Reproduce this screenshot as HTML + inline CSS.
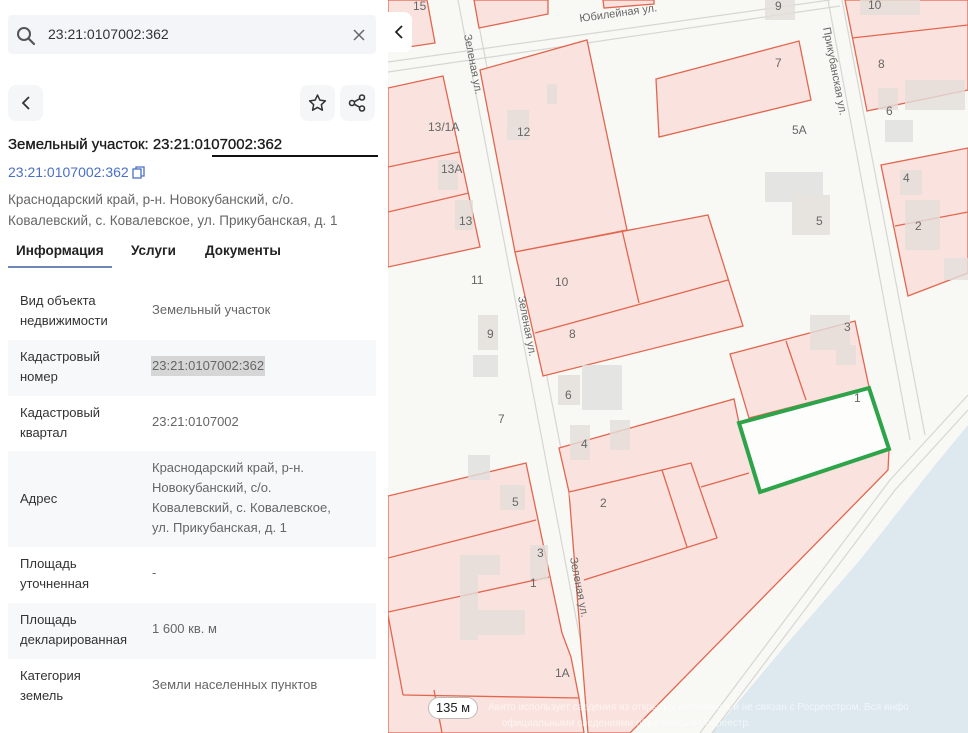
<!DOCTYPE html>
<html><head><meta charset="utf-8"><style>
*{margin:0;padding:0;box-sizing:border-box}
body{width:968px;height:733px;overflow:hidden;font-family:"Liberation Sans","Noto Sans CJK SC",sans-serif;background:#fff;position:relative}
#left{position:absolute;left:0;top:0;width:388px;height:733px;background:#fff}
.abs{position:absolute}
.btn{position:absolute;background:#f5f6f8;border-radius:8px;width:35px;height:36px}
.row{position:absolute;left:8px;width:368px}
.row.g{background:#f7f8fa}
.lab{position:absolute;left:12px;font-size:13px;line-height:20px;color:#333}
.val{position:absolute;left:144px;font-size:13px;line-height:20px;color:#666}
#map{position:absolute;left:388px;top:0;width:580px;height:733px;overflow:hidden;background:#f8f8f4}
</style></head><body>
<div id="left">
 <div class="abs" style="left:8px;top:15px;width:368px;height:39px;background:#f3f5f8;border-radius:4px"></div>
 <svg class="abs" style="left:16px;top:26px" width="20" height="20" viewBox="0 0 20 20"><circle cx="8" cy="8" r="6" fill="none" stroke="#555" stroke-width="2"/><path d="M12.5 12.5 L18 18" stroke="#555" stroke-width="2.2" stroke-linecap="round"/></svg>
 <div class="abs" style="left:48px;top:26px;font-size:14px;color:#333">23:21:0107002:362</div>
 <svg class="abs" style="left:353px;top:29px" width="12" height="12"><path d="M1 1L11 11M11 1L1 11" stroke="#666" stroke-width="1.5"/></svg>
 <div class="btn" style="left:8px;top:85px"></div>
 <svg class="abs" style="left:19px;top:95px" width="14" height="16"><path d="M10 2L4 8L10 14" fill="none" stroke="#333" stroke-width="1.8"/></svg>
 <div class="btn" style="left:300px;top:85px"></div>
 <svg class="abs" style="left:307px;top:93px" width="21" height="20" viewBox="0 0 24 24"><path d="M12 2.5l2.9 6.1 6.6.8-4.9 4.6 1.3 6.6L12 17.3l-5.9 3.3 1.3-6.6L2.5 9.4l6.6-.8z" fill="none" stroke="#333" stroke-width="1.8" stroke-linejoin="round"/></svg>
 <div class="btn" style="left:340px;top:85px"></div>
 <svg class="abs" style="left:347px;top:93px" width="20" height="20" viewBox="0 0 20 20"><circle cx="15" cy="4.5" r="2.5" fill="none" stroke="#333" stroke-width="1.6"/><circle cx="5" cy="10" r="2.5" fill="none" stroke="#333" stroke-width="1.6"/><circle cx="15" cy="15.5" r="2.5" fill="none" stroke="#333" stroke-width="1.6"/><path d="M7.2 8.8L12.8 5.7M7.2 11.2L12.8 14.3" stroke="#333" stroke-width="1.6"/></svg>
 <div class="abs" style="left:8px;top:136px;font-size:15px;color:#1a1a1a;-webkit-text-stroke:0.3px #1a1a1a">Земельный участок: 23:21:0107002:362</div>
 <div class="abs" style="left:212px;top:155px;width:166px;height:1.5px;background:#111"></div>
 <div class="abs" style="left:8px;top:164px;font-size:14px;color:#4a6fc8">23:21:0107002:362</div>
 <svg class="abs" style="left:132px;top:166px" width="13" height="13"><rect x="1" y="3" width="8" height="9" fill="none" stroke="#4a6fc8" stroke-width="1.3"/><path d="M4 3V1H12V10H9" fill="none" stroke="#4a6fc8" stroke-width="1.3"/></svg>
 <div class="abs" style="left:8px;top:189px;font-size:13.5px;line-height:21px;color:#666">Краснодарский край, р-н. Новокубанский, с/о.<br>Ковалевский, с. Ковалевское, ул. Прикубанская, д. 1</div>
 <div class="abs" style="left:16px;top:243px;font-size:13.5px;font-weight:bold;color:#222">Информация</div>
 <div class="abs" style="left:131px;top:243px;font-size:13.5px;font-weight:bold;color:#222">Услуги</div>
 <div class="abs" style="left:205px;top:243px;font-size:13.5px;font-weight:bold;color:#222">Документы</div>
 <div class="abs" style="left:8px;top:266px;width:104px;height:2px;background:#6f86b6"></div>

 <div class="row" style="top:284px;height:56px"><div class="lab" style="top:7px">Вид объекта<br>недвижимости</div><div class="val" style="top:16px">Земельный участок</div></div>
 <div class="row g" style="top:340px;height:56px"><div class="lab" style="top:7px">Кадастровый<br>номер</div><div class="val" style="top:16px;background:#d6d6d6;padding:0 1px;left:143px">23:21:0107002:362</div></div>
 <div class="row" style="top:396px;height:55px"><div class="lab" style="top:7px">Кадастровый<br>квартал</div><div class="val" style="top:16px">23:21:0107002</div></div>
 <div class="row g" style="top:451px;height:96px"><div class="lab" style="top:38px">Адрес</div><div class="val" style="top:7px">Краснодарский край, р-н.<br>Новокубанский, с/о.<br>Ковалевский, с. Ковалевское,<br>ул. Прикубанская, д. 1</div></div>
 <div class="row" style="top:547px;height:56px"><div class="lab" style="top:7px">Площадь<br>уточненная</div><div class="val" style="top:16px">-</div></div>
 <div class="row g" style="top:603px;height:56px"><div class="lab" style="top:7px">Площадь<br>декларированная</div><div class="val" style="top:16px">1 600 кв. м</div></div>
 <div class="row" style="top:659px;height:56px"><div class="lab" style="top:7px">Категория<br>земель</div><div class="val" style="top:16px">Земли населенных пунктов</div></div>
</div>

<div id="map">
<svg width="580" height="733" viewBox="388 0 580 733" style="position:absolute;left:0;top:0">
 <path d="M968 425 L935 465 L860 560 L790 640 L712 733 L968 733 Z" fill="#dde9ef"/>
 <g stroke="#d6d6d2" stroke-width="1.2" fill="none">
  <path d="M458 0 L598 733"/><path d="M474 0 L616 733"/>
  <path d="M388 62 L830 0"/><path d="M388 72 L840 6"/>
  <path d="M828 0 L910 440"/><path d="M842 0 L925 435"/>
  <path d="M968 395 L890 480 L700 733"/><path d="M968 410 L895 490 L712 733"/>
 </g>
 <g fill="#fae3de" stroke="#e2664f" stroke-width="1.3">
  <path d="M388 0 L427 0 L435 43 L388 50Z"/>
  <path d="M474 0 L548 0 L548 14 L479 28Z"/>
  <path d="M603 0 L654 0 L654 4 L604 8Z"/>
  <path d="M480 70 L587 40 L627 230 L515 252Z"/>
  <path d="M515 252 L708 215 L743 326 L543 376Z"/>
  <path d="M622 230 L639 303"/><path d="M535 333 L728 280"/>
  <path d="M656 79 L799 41 L811 100 L659 137Z"/>
  <path d="M388 88 L443 76 L480 247 L388 267Z"/>
  <path d="M388 167 L459 152"/><path d="M388 212 L469 193"/>
  <path d="M845 0 L968 0 L968 90 L867 111Z"/><path d="M852 38 L968 25"/>
  <path d="M881 165 L968 148 L968 273 L908 296Z"/><path d="M895 226 L968 212"/>
  <path d="M730 354 L855 321 L869 387 L749 418Z"/><path d="M786 341 L806 400"/>
  <path d="M559 448 L734 399 L739 423 L869 388 L889 449 L888 470 L630 733 L588 733 L569 492Z"/>
  <path d="M569 492 L662 470 L691 463 L717 538 L584 580"/><path d="M662 470 L687 547"/><path d="M701 487 L749 473"/>
  <path d="M388 496 L526 463 L562 633 L571 657 L579 698 L584 733 L388 733Z"/>
  <path d="M388 558 L536 520"/><path d="M388 612 L549 577"/><path d="M403 695 L579 698"/><path d="M388 615 L403 695"/><path d="M434 690 L442 733"/>
 </g>
 <g fill="#e4dfdb" opacity="0.8">
  <rect x="507" y="110" width="22" height="30"/><rect x="547" y="84" width="10" height="20"/>
  <rect x="438" y="160" width="20" height="30"/><rect x="455" y="200" width="18" height="30"/>
  <rect x="765" y="172" width="58" height="30" fill="#e0e0e0"/><rect x="792" y="195" width="38" height="40"/>
  <rect x="885" y="120" width="28" height="22" fill="#e0e0e0"/><rect x="905" y="80" width="60" height="30"/>
  <rect x="878" y="88" width="20" height="22"/><rect x="900" y="170" width="22" height="25"/>
  <rect x="905" y="200" width="35" height="50"/><rect x="944" y="258" width="24" height="22"/>
  <rect x="478" y="315" width="20" height="35"/><rect x="473" y="355" width="25" height="22" fill="#e0e0e0"/>
  <rect x="558" y="375" width="22" height="30"/><rect x="582" y="365" width="40" height="45" fill="#e0e0e0"/>
  <rect x="570" y="425" width="20" height="35"/><rect x="610" y="420" width="20" height="30"/>
  <rect x="468" y="455" width="22" height="25" fill="#e0e0e0"/><rect x="500" y="485" width="25" height="25"/>
  <rect x="530" y="545" width="18" height="35"/><rect x="460" y="555" width="40" height="20"/>
  <rect x="460" y="555" width="18" height="85"/><rect x="470" y="610" width="55" height="25"/>
  <rect x="810" y="315" width="40" height="35"/><rect x="836" y="345" width="20" height="20"/>
  <rect x="765" y="0" width="30" height="20"/><rect x="860" y="0" width="60" height="15"/>
 </g>
 <path d="M739 423 L869 388 L889 449 L760 492Z" fill="#fdfdfb" stroke="#2ea44a" stroke-width="4" stroke-linejoin="miter"/>
 <g font-family="Liberation Sans, sans-serif" font-size="12" fill="#666">
  <text x="413" y="10">15</text><text x="775" y="10">9</text><text x="868" y="9">10</text>
  <text x="428" y="131">13/1А</text><text x="441" y="173">13А</text><text x="459" y="225">13</text>
  <text x="517" y="136">12</text><text x="775" y="67">7</text><text x="792" y="134">5А</text>
  <text x="878" y="68">8</text><text x="886" y="115">6</text><text x="903" y="182">4</text><text x="915" y="230">2</text>
  <text x="816" y="225">5</text><text x="471" y="284">11</text><text x="555" y="286">10</text>
  <text x="569" y="338">8</text><text x="487" y="338">9</text><text x="844" y="331">3</text>
  <text x="565" y="399">6</text><text x="498" y="423">7</text><text x="854" y="402">1</text>
  <text x="581" y="448">4</text><text x="512" y="506">5</text><text x="600" y="507">2</text>
  <text x="537" y="557">3</text><text x="530" y="587">1</text><text x="555" y="677">1А</text>
  <text x="580" y="22" font-size="11" transform="rotate(-8 580 22)">Юбилейная ул.</text>
  <text x="464" y="35" font-size="11" transform="rotate(79 464 35)">Зеленая ул.</text>
  <text x="518" y="297" font-size="11" transform="rotate(79 518 297)">Зеленая ул.</text>
  <text x="570" y="558" font-size="11" transform="rotate(79 570 558)">Зеленая ул.</text>
  <text x="823" y="28" font-size="11" transform="rotate(79 823 28)">Прикубанская ул.</text>
 </g>
</svg>
 <div class="abs" style="left:0;top:12px;width:24px;height:40px;background:#fff;border-radius:0 8px 8px 0"></div>
 <svg class="abs" style="left:5px;top:24px" width="12" height="16"><path d="M9 2L3 8L9 14" fill="none" stroke="#222" stroke-width="1.8"/></svg>
 <div class="abs" style="left:40px;top:697px;width:50px;height:22px;background:#fff;border:1px solid #bbb;border-radius:11px;font-size:13px;line-height:20px;text-align:center;color:#222">135 м</div>
 <div class="abs" style="left:28px;top:700px;width:560px;font-size:10px;line-height:16px;color:rgba(255,255,255,0.6);padding-left:72px">Авито использует сведения из открытых источников и не связан с Росреестром. Вся инфо<br>&nbsp;&nbsp;&nbsp;&nbsp;&nbsp;официальными сведениями обратитесь в Росреестр.</div>
</div>
</body></html>
